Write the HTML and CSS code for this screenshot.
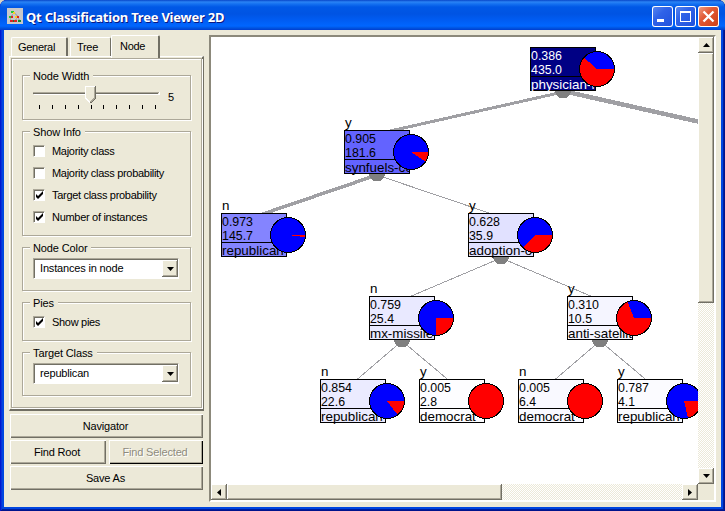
FILE: index.html
```
<!DOCTYPE html>
<html lang="en">
<head>
<meta charset="utf-8">
<title>Qt Classification Tree Viewer 2D</title>
<link rel="stylesheet" href="styles.css">
</head>
<body>
<div class="window">
  <header class="titlebar">
    <svg class="app-icon" width="16" height="16" viewBox="0 0 16 16" shape-rendering="crispEdges">
      <rect width="16" height="16" fill="#c8c8ca"/>
      <path d="M7 5L4 9M8 5l3 4M4 10l-1 3M11 10l2 3M10 10l-2 3" stroke="#aaa" fill="none"/>
      <path d="M4 3h3v2H4zM2 8h2v2H2z" fill="#2c3"/><path d="M6 4h2v2H6zM8 8h2v2H8z" fill="#fc2"/>
      <path d="M4 8h2v2H4zM10 8h2v2h-2zM3 12h3v2H3zM7 12h3v2H7z" fill="#d22"/><path d="M11 12h3v2h-3zM6 12h1v2H6z" fill="#183"/>
    </svg>
    <h1 class="title">Qt Classification Tree Viewer 2D</h1>
    <div class="controls">
      <svg class="ctl" width="21" height="21"><path d="M5 13h7v3H5z" fill="#fff"/></svg>
      <svg class="ctl" width="21" height="21"><path d="M5 5h11v11H5zM6 7v8h9V7z" fill="#fff" fill-rule="evenodd"/></svg>
      <svg class="ctl close" width="21" height="21"><path d="M5.5 5.5l10 10M15.5 5.5l-10 10" stroke="#fff" stroke-width="2.3"/></svg>
    </div>
  </header>
  <div class="content">
    <aside class="side">
      <nav class="tabs"><span class="tab general">General</span><span class="tab tree-tab">Tree</span><span class="tab active">Node</span></nav>
      <div class="pane"><div class="pane-inner">
        <section class="group g-width"><h2>Node Width</h2>
          <div class="slider-row">
            <svg width="128" height="24" shape-rendering="crispEdges">
              <path d="M0 6.5h126" stroke="#aca899"/><path d="M0 7.5h125" stroke="#716f64"/><path d="M1 8.5h125M126.5 6v3" stroke="#fff"/>
              <path d="M52 0h11v12l-5 5h-1l-5-5z" fill="#ece9d8"/><path d="M52 0h10v1h-9v11h-1z" fill="#fff"/><path d="M52.500 12l5 5" stroke="#fff"/>
              <path d="M62.500 0v12l-5 5" stroke="#716f64" fill="none"/><path d="M61.500 1v11l-4 4" stroke="#aca899" fill="none"/>
              <path d="M6.500 19v4M19.500 19v4M32.500 19v4M45.500 19v4M58.500 19v4M70.500 19v4M83.500 19v4M96.500 19v4M109.500 19v4M122.500 19v4" stroke="#000"/>
            </svg><span>5</span>
          </div>
        </section>
        <section class="group g-info"><h2>Show Info</h2>
          <label class="check"><i class="box"></i><span>Majority class</span></label>
          <label class="check"><i class="box"></i><span>Majority class probability</span></label>
          <label class="check"><i class="box"><svg width="9" height="9"><path d="M1 3v3l2 2 5-5V0L3 5z"/></svg></i><span>Target class probability</span></label>
          <label class="check"><i class="box"><svg width="9" height="9"><path d="M1 3v3l2 2 5-5V0L3 5z"/></svg></i><span>Number of instances</span></label>
        </section>
        <section class="group g-combo"><h2>Node Color</h2>
          <div class="combo"><span>Instances in node</span><b class="drop"><svg width="7" height="4"><path d="M0 0h7L3.500 4z"/></svg></b></div>
        </section>
        <section class="group g-pies"><h2>Pies</h2>
          <label class="check"><i class="box"><svg width="9" height="9"><path d="M1 3v3l2 2 5-5V0L3 5z"/></svg></i><span>Show pies</span></label>
        </section>
        <section class="group g-combo"><h2>Target Class</h2>
          <div class="combo"><span>republican</span><b class="drop"><svg width="7" height="4"><path d="M0 0h7L3.500 4z"/></svg></b></div>
        </section>
      </div></div>
      <div class="buttons">
        <div class="btn wide">Navigator</div>
        <div class="btn">Find Root</div><div class="btn disabled">Find Selected</div>
        <div class="btn wide">Save As</div>
      </div>
    </aside>
    <main class="view">
      <svg id="tree" class="canvas" width="487" height="447" viewBox="211 37 487 447"></svg>
      <div class="scroll vertical">
        <b class="sbtn"><svg width="7" height="4"><path d="M0 4h7L3.500 0z"/></svg></b><b class="thumb"></b><i></i>
        <b class="sbtn"><svg width="7" height="4"><path d="M0 0h7L3.500 4z"/></svg></b>
      </div>
      <div class="scroll horizontal">
        <b class="sbtn"><svg width="4" height="7"><path d="M4 0v7L0 3.500z"/></svg></b><b class="thumb"></b><i></i>
        <b class="sbtn"><svg width="4" height="7"><path d="M0 0v7l4-3.500z"/></svg></b>
      </div>
      <div class="corner"></div>
    </main>
  </div>
</div>
<script src="tree.js"></script>
</body>
</html>
```
FILE: styles.css
```
* { box-sizing: border-box; }
body { margin: 0; background: #d8d4c4; font: 11px "Liberation Sans", Arial, sans-serif; color: #000; }
h1, h2 { margin: 0; font-size: inherit; font-weight: normal; }
svg { display: block; }
.window { width: 725px; height: 511px; padding: 0 4px 4px; overflow: hidden; border-radius: 7px 7px 0 0;
  background: #0046e0; box-shadow: inset 1px 0 #0019cf, inset -1px 0 #00138c, inset 0 -1px #00138c, inset 2px 0 #0831d9, inset -2px 0 #001ea0, inset 0 -2px #001ea0; }
.titlebar { height: 30px; margin: 0 -4px; padding: 3px 6px 0 7px; display: flex; align-items: center;
  background: linear-gradient(#0846c8 0, #2a83f5 2px, #1470f0 4px, #0058e6 7px, #0054e3 14px, #005cf2 20px, #0066ff 26px, #0054e0 28px, #003dd0 30px); }
.app-icon { margin-top: -1px; }
.title { margin-left: 3px; flex: 1; font: bold 13px "Noto Sans", sans-serif; letter-spacing: -0.22px; color: #fff; text-shadow: 1px 1px #0a1883; white-space: nowrap; }
.controls { display: flex; gap: 2px; }
.ctl { border-radius: 3px; box-shadow: inset 0 0 0 1px #fff; background: linear-gradient(135deg, #5c8af0, #2f62e8 40%, #1f50dc); }
.ctl.close { background: linear-gradient(135deg, #f0a48c, #e25a36 40%, #cc3c14); }
.content { height: 477px; background: #ece9d8; display: flex; padding: 5px 5px 0; }
.side { width: 200px; }
.tabs { display: flex; align-items: flex-end; height: 21px; padding-left: 2px; }
.tab { height: 19px; padding: 3px 0 0 6px; letter-spacing: -.3px; border: solid; border-width: 1px 1px 0; border-color: #fff #716f64 #fff #fff; border-radius: 2px 2px 0 0; }
.general { width: 57px; border-right-width: 2px; }
.tree-tab { width: 41px; margin-left: 2px; }
.tab.active { width: 49px; height: 23px; margin-bottom: -2px; padding: 4px 0 0 8px; border-right-width: 2px; background: #ece9d8; position: relative; z-index: 1; }
.pane { width: 195px; height: 355px; border: solid; border-width: 1px 2px 2px 1px; border-color: #fff #716f64 #716f64 #fff; padding: 1px 0 1px 1px; }
.pane-inner { width: 191px; height: 350px; border: 1px solid #aca899; box-shadow: inset 1px 1px #fff, 1px 1px #fff; padding: 16px 0 0 10px; }
.group { width: 169px; margin-bottom: 11px; border: 1px solid #aca899; box-shadow: inset 1px 1px #fff, 1px 1px #fff; padding: 0 0 0 10px; letter-spacing: -.3px; }
.group h2 { width: max-content; height: 13px; margin: -7px 0 0 -3px; padding: 0 4px 0 3px; background: #ece9d8; line-height: 14px; letter-spacing: -.12px; }
.g-width { height: 45px; }
.g-info { height: 105px; }
.g-combo { height: 44px; }
.g-pies { height: 39px; }
.slider-row { display: flex; margin-top: 4px; }
.slider-row span { margin: 5px 0 0 7px; }
.check { display: flex; align-items: center; height: 22px; }
.group h2 + .check { margin-top: 2px; }
.box { width: 12px; height: 12px; margin-right: 7px; background: #fff; border: 1px solid; border-color: #aca899 #fff #fff #aca899; box-shadow: inset 1px 1px #716f64; }
.box svg { margin: 1px; }
.combo { display: flex; width: 146px; height: 21px; margin-top: 4px; background: #fff; border: 1px solid; border-color: #aca899 #fff #fff #aca899; box-shadow: inset 1px 1px #716f64; }
.combo span { flex: 1; padding: 3px 0 0 6px; letter-spacing: -.17px; }
.drop { width: 16px; margin: 1px 0; }
.drop, .sbtn, .thumb { flex: none; display: flex; align-items: center; justify-content: center; background: #ece9d8; box-shadow: inset -1px -1px #716f64, inset 1px 1px #fff, inset -2px -2px #aca899; }
.buttons { display: grid; grid-template-columns: 96px 95px; gap: 2px 3px; margin: 3px 0 0 1px; }
.btn { height: 24px; line-height: 25px; text-align: center; letter-spacing: -.17px; padding-right: 2px; box-shadow: inset 1px 1px #fff, inset -1px -1px #716f64, inset -2px -2px #aca899; }
.wide { grid-column: 1 / 3; width: 193px; }
.disabled { width: 94px; color: #8e8b7d; text-shadow: 1px 1px #fff; box-shadow: inset 1px 1px #fff, inset -1px -1px #000, inset -2px -2px #aca899; }
.view { width: 507px; height: 467px; display: grid; grid-template: 447px 16px / 487px 16px; border: 2px solid; border-color: #8c897b #fff #fff #8c897b; }
.canvas { background: #fff; font-size: 13.4px; }
.scroll { display: flex; background: repeating-conic-gradient(#fff 0 25%, #ece9d8 0 50%) 0 0 / 2px 2px; }
.scroll i { flex: 1; }
.vertical { flex-direction: column; }
.sbtn { width: 16px; height: 16px; }
.vertical .thumb { height: 250px; }
.horizontal .thumb { width: 275px; }
.edge { stroke: #a0a0a4; shape-rendering: crispEdges; }
.hub { fill: #808080; shape-rendering: crispEdges; }
.frame { stroke: #000; shape-rendering: crispEdges; }
.pie { shape-rendering: crispEdges; }
.figure { font-size: 13.4px; }
```
FILE: tree.js
```
const NS = 'http://www.w3.org/2000/svg';
const tree = document.getElementById('tree');

// x, y, branch label, probability, instances, caption, fill, text colour, blue share
const nodes = [
  [530, 47, '', '0.386', '435.0', 'physician-f', '#000084', '#fff', .386],
  [344, 130, 'y', '0.905', '181.6', 'synfuels-co', '#6363ff', '#000', .905],
  [221, 213, 'n', '0.973', '145.7', 'republican', '#8484ff', '#000', .98],
  [468, 213, 'y', '0.628', '35.9', 'adoption-o', '#e1e1ff', '#000', .628],
  [369, 296, 'n', '0.759', '25.4', 'mx-missile', '#e9e9ff', '#000', .754],
  [567, 296, 'y', '0.310', '10.5', 'anti-satellit', '#f5f5ff', '#000', .31],
  [320, 379, 'n', '0.854', '22.6', 'republican', '#ebebff', '#000', .854],
  [419, 379, 'y', '0.005', '2.8', 'democrat', '#fdfdff', '#000', 0],
  [518, 379, 'n', '0.005', '6.4', 'democrat', '#f9f9ff', '#000', 0],
  [617, 379, 'y', '0.787', '4.1', 'republican', '#fbfbff', '#000', .787]
];
const edges = [[0, 1, 3], [1, 2, 3.5], [1, 3, 1], [3, 4, 1], [3, 5, 1], [4, 6, 1], [4, 7, 1], [5, 8, 1], [5, 9, 1]];

function add(name, attrs, text) {
  const el = document.createElementNS(NS, name);
  for (const k in attrs) el.setAttribute(k, attrs[k]);
  if (text) el.textContent = text;
  tree.appendChild(el);
  return el;
}
function label(x, y, text, fill, width, clip) {
  const a = { x, y, fill };
  if (width) { a.class = 'figure'; a.textLength = width; a.lengthAdjust = 'spacingAndGlyphs'; }
  if (clip) a['clip-path'] = 'url(#' + clip + ')';
  add('text', a, text);
}

add('line', { class: 'edge', x1: 563, y1: 91, x2: 720, y2: 126.5, 'stroke-width': 4.5 });
for (const [a, b, w] of edges) {
  add('line', { class: 'edge', x1: nodes[a][0] + 33, y1: nodes[a][1] + 45, x2: nodes[b][0] + 33, y2: nodes[b][1] + 4, 'stroke-width': w });
}
nodes.forEach(([x, y, branch, prob, count, caption, fill, ink, share], i) => {
  if (i < 6 && i !== 2) add('circle', { class: 'hub', cx: x + 33, cy: y + 43.5, r: 8 });
  if (branch) label(x + 1, y - 3, branch, '#000');
  add('rect', { class: 'frame', x: x + .5, y: y + .5, width: 65, height: 43, fill });
  add('line', { class: 'frame', x1: x, y1: y + 29.5, x2: x + 66, y2: y + 29.5 });
  const clip = add('clipPath', { id: 'clip' + i });
  const area = document.createElementNS(NS, 'rect');
  for (const [k, v] of [['x', x], ['y', y + 30], ['width', 66], ['height', 16]]) area.setAttribute(k, v);
  clip.appendChild(area);
  label(x + 1, y + 13, prob, ink, 31);
  label(x + 1, y + 27, count, ink, count.length * 7 - 4);
  label(x + 1, y + 42, caption, ink, 0, 'clip' + i);
  const cx = x + 67, cy = y + 22, r = 17.5;
  add('circle', { class: 'pie', cx, cy, r, fill: share ? '#00f' : '#f00' });
  if (share) {
    const t = -share * 2 * Math.PI;
    const px = cx + r * Math.cos(t), py = cy + r * Math.sin(t);
    add('path', { class: 'pie', fill: '#f00', d: `M${cx} ${cy}L${px} ${py}A${r} ${r} 0 ${share < .5 ? 1 : 0} 0 ${cx + r} ${cy}Z` });
  }
  add('circle', { class: 'frame', cx, cy, r, fill: 'none' });
});
```
